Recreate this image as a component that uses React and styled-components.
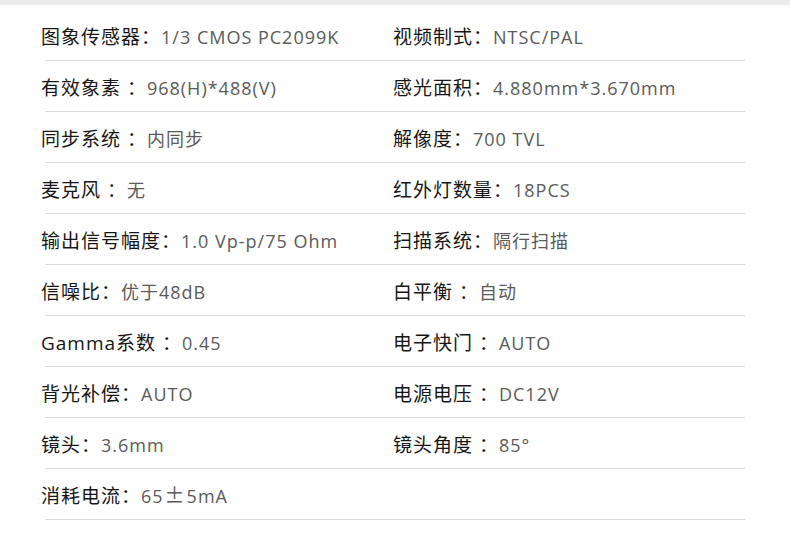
import React from 'react';
import styled, { createGlobalStyle } from 'styled-components';

const GlobalStyle = createGlobalStyle`
  body {
    margin: 0;
    background: #fff;
    font-family: "Open Sans", "Noto Sans CJK SC", sans-serif;
  }
`;

const TopBar = styled.div`
  height: 5px;
  background-color: #ececec;
`;

const SpecTable = styled.div`
  margin: 5px 45px 0;
  display: flex;
  flex-direction: column;
`;

const Row = styled.div`
  display: grid;
  grid-template-columns: 352px 1fr;
  height: 51px;
  box-sizing: border-box;
  padding-top: 4px;
  border-bottom: 1px solid #dcdcdc;
  align-items: center;
`;

const Cell = styled.div`
  margin-left: -4px;
  line-height: 24px;
  white-space: nowrap;
`;

const Label = styled.span`
  color: #161616;
  font-size: 19px;
  letter-spacing: 1px;
`;

const Value = styled.span`
  color: #5a5a5a;
  font-size: 18px;
  letter-spacing: 1px;
`;

const Wide = styled.span`
  font-family: "Noto Sans CJK SC", sans-serif;
  font-size: 20px;
  line-height: 18px;
  padding: 0 1px;
`;

const specs = [
  [['图象传感器：', '1/3 CMOS PC2099K'], ['视频制式：', 'NTSC/PAL']],
  [['有效象素 ：', '968(H)*488(V)'], ['感光面积：', '4.880mm*3.670mm']],
  [['同步系统 ：', '内同步'], ['解像度：', '700 TVL']],
  [['麦克风 ：', '无'], ['红外灯数量：', '18PCS']],
  [['输出信号幅度：', '1.0 Vp-p/75 Ohm'], ['扫描系统：', '隔行扫描']],
  [['信噪比：', '优于48dB'], ['白平衡 ：', '自动']],
  [['Gamma系数 ：', '0.45'], ['电子快门 ：', 'AUTO']],
  [['背光补偿：', 'AUTO'], ['电源电压 ：', 'DC12V']],
  [['镜头：', '3.6mm'], ['镜头角度 ：', '85°']],
  [['消耗电流：', <>65<Wide>±</Wide>5mA</>], null],
];

const App = () => {
  return (
    <>
      <GlobalStyle />
      <TopBar />
      <SpecTable>
        {specs.map((row, i) => (
          <Row key={i}>
            {row.map((item, j) => (
              <Cell key={j}>
                {item && (
                  <>
                    <Label>{item[0]}</Label>
                    <Value>{item[1]}</Value>
                  </>
                )}
              </Cell>
            ))}
          </Row>
        ))}
      </SpecTable>
    </>
  );
};

export default App;
